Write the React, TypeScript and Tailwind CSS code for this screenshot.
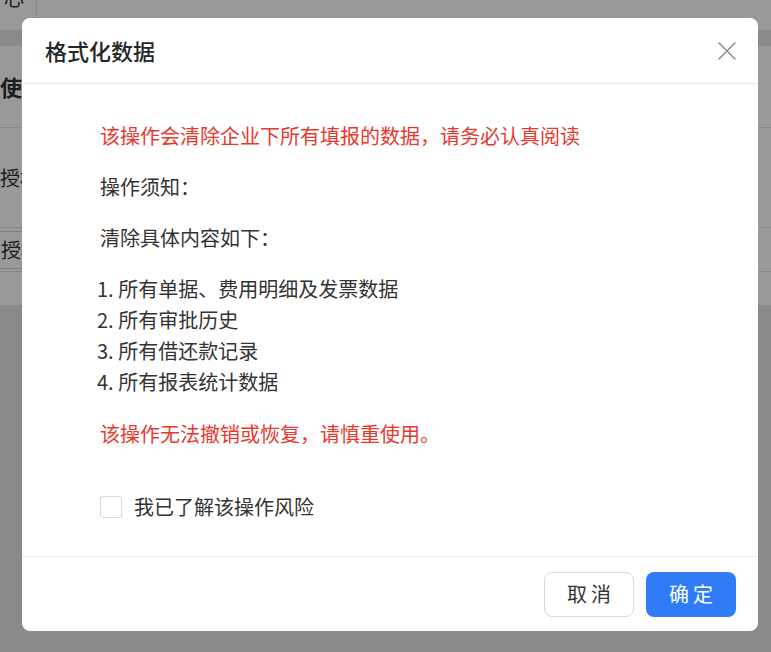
import { X } from 'lucide-react';

const font = { fontFamily: '"Noto Sans CJK SC", "Noto Sans", sans-serif' };

const contents = [
    '1. 所有单据、费用明细及发票数据',
    '2. 所有审批历史',
    '3. 所有借还款记录',
    '4. 所有报表统计数据',
];

const BackgroundPage = () => {
    return (
        <div className="w-[771px] h-[652px] overflow-hidden bg-[#e6e6e6] text-[#333]">
            <div className="h-[30px] bg-white flex">
                <div className="w-[37px] border-r border-[#e5e5e5] pl-[4px] text-[20px] leading-none -mt-[12px]">
                    心
                </div>
            </div>
            <div className="h-[16px]" />
            <div className="bg-white h-[259px] flex flex-col">
                <div className="h-[82px] border-b border-[#e5e5e5] flex items-center text-[22px] font-bold">
                    使
                </div>
                <div className="h-[100px] border-b border-[#e5e5e5] flex items-center text-[20px]">
                    授权
                </div>
                <div className="h-[44px] border-b border-[#e5e5e5] flex items-center">
                    <div className="h-[38px] -ml-[10px] px-[10px] border border-[#d9d9d9] rounded flex items-center text-[20px]">
                        授权
                    </div>
                </div>
            </div>
        </div>
    );
};

const FormatDataModal = () => {
    return (
        <div className="w-[736px] h-[613px] bg-white rounded-[8px] flex flex-col">
            <div className="h-[66px] shrink-0 border-b border-[#e8e8e8] flex items-center justify-between pl-[23px] pr-[15px]">
                <span className="text-[22px] font-medium text-[#262626]">格式化数据</span>
                <X size={32} strokeWidth={1.1} className="text-[#8c8c8c]" />
            </div>
            <div className="flex-1 pl-[78px] pt-[36px] text-[20px] leading-[31px] text-[#333]">
                <p className="text-[#e8392f]">该操作会清除企业下所有填报的数据，请务必认真阅读</p>
                <p className="mt-[20px]">操作须知：</p>
                <p className="mt-[20px]">清除具体内容如下：</p>
                <ul className="mt-[20px] -ml-[3px]">
                    {contents.map((item) => (
                        <li key={item}>{item}</li>
                    ))}
                </ul>
                <p className="mt-[21px] text-[#e8392f]">该操作无法撤销或恢复，请慎重使用。</p>
                <label className="mt-[42px] flex items-center gap-[12px]">
                    <span className="w-[22px] h-[22px] border border-[#d9d9d9] rounded-[3px] bg-white" />
                    <span>我已了解该操作风险</span>
                </label>
            </div>
            <div className="h-[75px] shrink-0 border-t border-[#ececec] flex items-center justify-end gap-[12px] pr-[22px]">
                <button className="w-[90px] h-[45px] rounded-[8px] border border-[#d9d9d9] bg-white text-[20px] tracking-[4px] pl-[4px] text-[#333]">
                    取消
                </button>
                <button className="w-[90px] h-[45px] rounded-[8px] bg-[#2f7cf6] text-white text-[20px] tracking-[4px] pl-[4px]">
                    确定
                </button>
            </div>
        </div>
    );
};

export default function App() {
    return (
        <div className="relative w-[771px] h-[652px] overflow-hidden" style={font}>
            <BackgroundPage />
            <div className="absolute inset-0 bg-black/40 pl-[22px] pt-[18px]">
                <FormatDataModal />
            </div>
        </div>
    );
}
